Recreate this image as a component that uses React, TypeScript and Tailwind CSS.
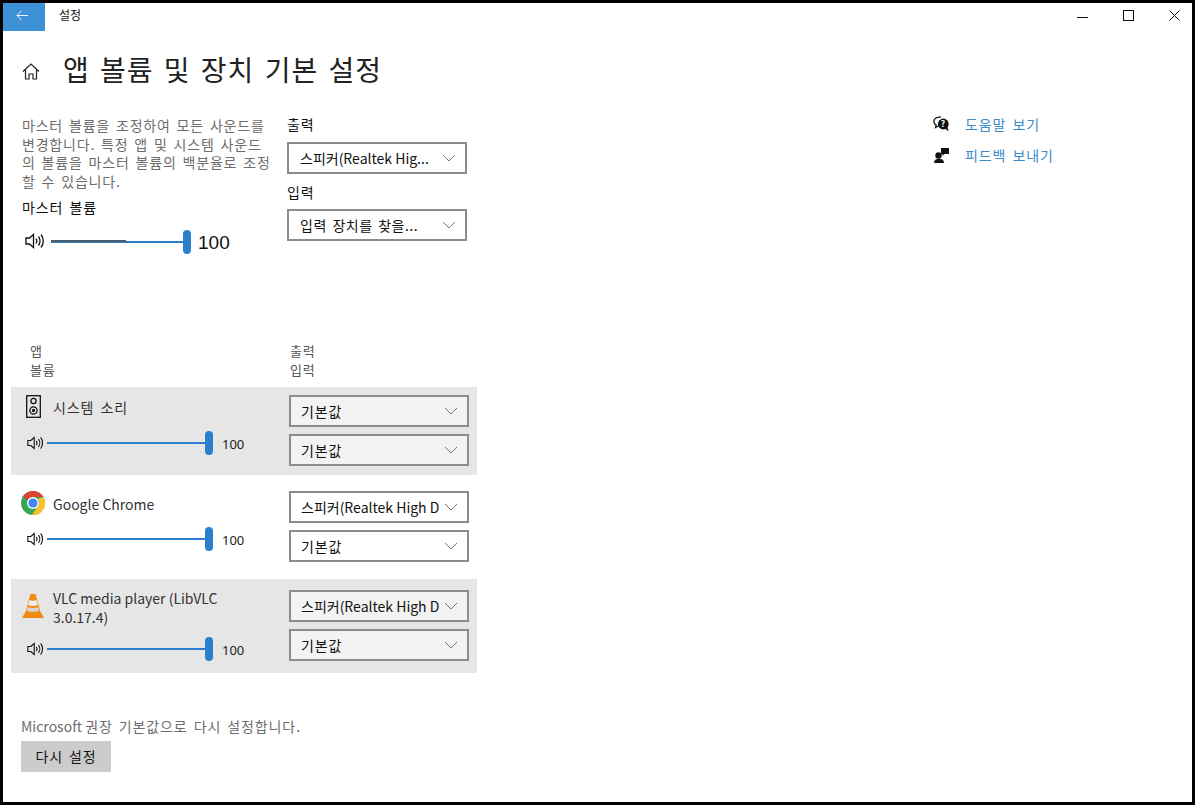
import React from 'react';

const FONT = "font-['Noto_Sans_CJK_KR','Noto_Sans',sans-serif]";
// korean runs are wider in the reference than latin ones
const KO = 'tracking-[0.9px] [word-spacing:2px]';

const SpeakerIcon = ({ className }: { className: string }) => (
  <svg viewBox="0 0 20 16" fill="none" stroke="#111" strokeWidth="1.300" className={className}>
    <path d="M1 5h3.500L8.500 1.500v13L4.500 11H1z" />
    <path d="M11 5.500c1 1.500 1 3.500 0 5" />
    <path d="M13.500 3.500c2 2.500 2 6.500 0 9" />
    <path d="M16 1.500c3 3.500 3 9.500 0 13" />
  </svg>
);

const Chevron = () => (
  <svg viewBox="0 0 14 8" fill="none" stroke="#777" strokeWidth="1" className="w-[14px] h-[8px] shrink-0">
    <path d="M1 1l6 6 6-6" />
  </svg>
);

const Dropdown = ({ label, ko, top }: { label: React.ReactNode; ko?: boolean; top?: boolean }) => (
  <div className={`w-[180px] h-[32px] border-2 border-[#8c8c8c] bg-white/50 flex items-center pr-[9px] text-[14px] text-[#111] ${top ? 'pl-[11px]' : 'pl-[10px]'}`}>
    <span className={`flex-1 mr-[5px] whitespace-nowrap ${ko ? KO : ''}`}>{label}</span>
    <Chevron />
  </div>
);

const Slider = ({ big }: { big?: boolean }) => (
  <div className={big ? 'flex items-center h-[24px] ml-[3px]' : 'flex items-center h-[24px] ml-[16px]'}>
    <SpeakerIcon className={big ? 'w-[20px] h-[16px] -mt-[1px]' : 'w-[17px] h-[14px] -mt-[1px]'} />
    <div className={big ? 'ml-[6px] w-[140px] h-[24px] flex items-center relative' : 'ml-[3px] w-[166px] h-[24px] flex items-center relative'}>
      <div className="w-full h-[2px] bg-[#2a80cc]" />
      {big && <div className="absolute left-0 top-[10px] w-[75px] h-[3px] bg-[#4d5d6b] border-b border-[#2a80cc]" />}
      <div className="absolute right-0 top-0 w-[8px] h-[24px] rounded-full bg-[#2a80cc]" />
    </div>
    {big ? (
      <span className="ml-[7px] mt-[3px] text-[19px] text-[#111] font-['Liberation_Sans',sans-serif]">100</span>
    ) : (
      <span className="ml-[9px] mt-[3px] text-[13px] text-[#222] font-['Noto_Sans',sans-serif]">100</span>
    )}
  </div>
);

const ChromeIcon = () => (
  <svg viewBox="0 0 24 24" className="w-[24px] h-[24px] shrink-0 -mt-[4px]">
    <circle cx="12" cy="12" r="12" fill="#34a853" />
    <path d="M12 0a12 12 0 0 1 10.400 6H12a6 6 0 0 0-5.500 3.500L1.800 5.600A12 12 0 0 1 12 0z" fill="#db4437" />
    <path d="M22.400 6A12 12 0 0 1 11 24l5.500-8.500A6 6 0 0 0 16.800 7.800z" fill="#fbc02d" />
    <circle cx="12" cy="12" r="6" fill="#fff" />
    <circle cx="12" cy="12" r="4.600" fill="#4285f4" />
  </svg>
);

const BoxSpeakerIcon = () => (
  <svg viewBox="0 0 15 23" fill="none" stroke="#111" strokeWidth="1.300" className="w-[15px] h-[23px] shrink-0 -mt-[3px]">
    <rect x="0.700" y="0.700" width="13.600" height="21.600" />
    <circle cx="7.500" cy="6" r="2.600" />
    <circle cx="7.500" cy="15.500" r="3.600" />
    <circle cx="7.500" cy="15.500" r="1" />
  </svg>
);

const ConeIcon = () => (
  <svg viewBox="0 0 22 24" className="w-[22px] h-[24px] shrink-0 mt-[5px]">
    <path d="M0 24l3-5.500h16l3 5.500z" fill="#ee8a12" />
    <path d="M8.500 0h5L19 20c-3.500 2-12.500 2-16 0z" fill="#f28c10" />
    <path d="M7.300 6c2 1 5.400 1 7.400 0l1.200 5c-3 1.300-6.800 1.300-9.800 0z" fill="#ececec" />
    <path d="M5.600 13c3 1.200 7.800 1.200 10.800 0l.9 3.800c-3.500 1.500-9.100 1.500-12.600 0z" fill="#d4d4d4" />
  </svg>
);

const AppRow = ({
  icon,
  name,
  shaded,
  output,
  ko,
  className,
  nameClass,
}: {
  icon: React.ReactNode;
  name: React.ReactNode;
  shaded?: boolean;
  output: React.ReactNode;
  ko?: boolean;
  className: string;
  nameClass: string;
}) => (
  <div className={`w-[466px] flex ${shaded ? 'bg-[#e6e6e6]' : ''} ${className}`}>
    <div className="w-[278px] flex flex-col">
      <div className={`flex ${nameClass}`}>
        <div className="w-[42px] flex justify-center items-start pl-[2px]">{icon}</div>
        <div className="text-[14px] leading-[19px] text-[#333] w-[190px]">{name}</div>
      </div>
      <Slider />
    </div>
    <div className="flex flex-col gap-[7px]">
      <Dropdown label={output} ko={ko} />
      <Dropdown label="기본값" ko />
    </div>
  </div>
);

export default function App() {
  return (
    <div className={`w-[1195px] h-[805px] border-[3px] border-black bg-white overflow-hidden ${FONT}`}>
      <div className="h-[28px] flex items-start">
        <div className="w-[42px] h-[28px] bg-[#3d8fd6] flex items-center justify-center">
          <svg viewBox="0 0 14 12" fill="none" stroke="#fff" strokeWidth="1" className="w-[13px] h-[11px] -mt-[4px] -ml-[4px]">
            <path d="M13 6H1M6 1L1 6l5 5" />
          </svg>
        </div>
        <span className="ml-[14px] mt-[3px] text-[12px] leading-[18px] text-[#111]">설정</span>
        <div className="ml-auto flex items-center h-[20px] mt-[2px] pr-[12px] gap-[35px]">
          <svg viewBox="0 0 11 11" className="w-[11px] h-[11px]" stroke="#111" fill="none">
            <path d="M0 7.500h11" />
          </svg>
          <svg viewBox="0 0 11 11" className="w-[11px] h-[11px]" stroke="#111" fill="none">
            <rect x="0.500" y="0.500" width="10" height="10" />
          </svg>
          <svg viewBox="0 0 11 11" className="w-[11px] h-[11px]" stroke="#111" fill="none">
            <path d="M0.500 0.500l10 10M10.500 0.500l-10 10" />
          </svg>
        </div>
      </div>

      <div className="mt-[20px] h-[36px] flex items-center pl-[19px]">
        <svg viewBox="0 0 18 17" fill="none" stroke="#222" strokeWidth="1.200" className="w-[18px] h-[17px] mt-[5px]">
          <path d="M1 8.500L9 1l8 7.500M3.500 6.500V16H7v-5h4v5h3.500V6.500" />
        </svg>
        <h1 className="ml-[23px] text-[28px] leading-[36px] text-[#222] font-normal tracking-[1px] [word-spacing:3px]">
          앱 볼륨 및 장치 기본 설정
        </h1>
      </div>

      <div className="mt-[28px] flex">
        <div className="w-[907px]">
          <div className="flex h-[226px] pl-[19px]">
            <div className="w-[265px]">
              <p className="w-[252px] mt-[1px] text-[14px] leading-[18.700px] text-[#6d6d6d] tracking-[0.8px] [word-spacing:2px]">
                마스터 볼륨을 조정하여 모든 사운드를 변경합니다. 특정 앱 및 시스템 사운드의 볼륨을 마스터 볼륨의 백분율로 조정할 수 있습니다.
              </p>
              <div className={`mt-[7px] text-[14px] leading-[18px] text-[#111] ${KO}`}>마스터 볼륨</div>
              <div className="mt-[14px]">
                <Slider big />
              </div>
            </div>
            <div className="w-[180px]">
              <div className={`h-[18px] text-[14px] leading-[18px] text-[#111] ${KO}`}>출력</div>
              <div className="mt-[9px]">
                <Dropdown top label="스피커(Realtek Hig..." />
              </div>
              <div className={`mt-[9px] h-[18px] text-[14px] leading-[18px] text-[#111] ${KO}`}>입력</div>
              <div className="mt-[8px]">
                <Dropdown top label={<span className="tracking-[0.5px] [word-spacing:2px]">입력 장치를 찾을...</span>} />
              </div>
            </div>
          </div>

          <div className={`flex h-[46px] pl-[27px] text-[13px] leading-[19px] text-[#555] ${KO}`}>
            <div className="w-[260px]">
              <div>앱</div>
              <div>볼륨</div>
            </div>
            <div>
              <div>출력</div>
              <div>입력</div>
            </div>
          </div>

          <div className="ml-[8px] flex flex-col">
            <AppRow
              shaded
              className="h-[88px] pt-[8px]"
              icon={<BoxSpeakerIcon />}
              name={<span className={KO}>시스템 소리</span>}
              output="기본값"
              ko
              nameClass="h-[36px] pt-[3px]"
            />
            <AppRow
              className="h-[88px] pt-[9px] mt-[7px]"
              icon={<ChromeIcon />}
              name="Google Chrome"
              output="스피커(Realtek High D"
              nameClass="h-[36px] pt-[4px]"
            />
            <AppRow
              shaded
              className="h-[94px] pt-[11px] mt-[9px]"
              icon={<ConeIcon />}
              name="VLC media player (LibVLC 3.0.17.4)"
              output="스피커(Realtek High D"
              nameClass="h-[48px] -mt-[1px]"
            />
          </div>

          <div className="mt-[44px] ml-[18px] text-[14px] leading-[18px] text-[#6d6d6d]">
            Microsoft <span className={KO}>권장 기본값으로 다시 설정합니다.</span>
          </div>
          <button className={`mt-[6px] ml-[18px] w-[90px] h-[31px] bg-[#cccccc] text-[14px] text-[#111] ${KO}`}>다시 설정</button>
        </div>

        <div className={`ml-[23px] flex flex-col gap-[13px] text-[14px] leading-[18px] text-[#3a8ccb] ${KO}`}>
          <div className="flex items-center gap-[16px]">
            <svg viewBox="0 0 16 16" className="w-[16px] h-[16px]">
              <path d="M8 1.200C4 .6.800 2.500.800 5.500c0 1.600 1 3 2.400 3.700L2.500 11.500l3-1.500" fill="none" stroke="#111" strokeWidth="1.300" />
              <circle cx="10.300" cy="8" r="5.400" fill="#111" />
              <path d="M12 12.500l3.500 3-1-4.500z" fill="#111" />
              <text x="10.300" y="11" fontSize="8.500" fontWeight="700" fill="#fff" textAnchor="middle">?</text>
            </svg>
            <span>도움말 보기</span>
          </div>
          <div className="flex items-center gap-[16px]">
            <svg viewBox="0 0 16 16" className="w-[16px] h-[16px]">
              <circle cx="5.500" cy="8.500" r="3.200" fill="#111" />
              <path d="M1 16c0-3 2-4.300 5-4.300s5 1.300 5 4.300z" fill="#111" />
              <path d="M8 1h8v6h-4.500L9.500 9V7H8z" fill="#111" />
            </svg>
            <span>피드백 보내기</span>
          </div>
        </div>
      </div>
    </div>
  );
}
